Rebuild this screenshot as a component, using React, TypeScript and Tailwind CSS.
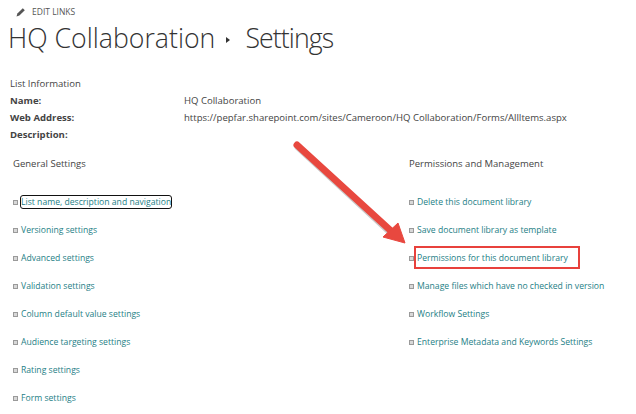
const generalLinks = [
  'List name, description and navigation',
  'Versioning settings',
  'Advanced settings',
  'Validation settings',
  'Column default value settings',
  'Audience targeting settings',
  'Rating settings',
  'Form settings',
];

const permissionLinks = [
  'Delete this document library',
  'Save document library as template',
  'Permissions for this document library',
  'Manage files which have no checked in version',
  'Workflow Settings',
  'Enterprise Metadata and Keywords Settings',
];

function Bullet() {
  return <span className="h-[5px] w-[5px] shrink-0 border border-[#9a9a9a] bg-[#d8d8d8]" />;
}

function SettingsLink({ label }: { label: string }) {
  const focused = label.startsWith('List name');
  const boxed = label.startsWith('Permissions');
  return (
    <li className="flex h-7 items-center gap-[3px]">
      <Bullet />
      <span
        className={`relative whitespace-nowrap text-[8.65px] leading-none text-[#1e8086] ${focused ? 'rounded-[2px] py-[2px] outline-[1.5px] outline-[#111]' : ''}`}
      >
        {label}
        {boxed && <span className="absolute -left-[3px] -top-[8px] h-[23px] w-[166px] border-2 border-[#e8413c]" />}
      </span>
    </li>
  );
}

export default function App() {
  return (
    <div className="relative h-[414px] w-[636px] overflow-hidden bg-white font-['Open_Sans',sans-serif] text-[#444]">
      <header className="pl-2 pt-[7px]">
        <div className="flex items-center gap-[6px] pl-2 text-[8.5px] leading-[10px] text-[#555]">
          <svg width="10" height="10" viewBox="0 0 10 10" fill="#555">
            <path d="M0.5 9.5 L1.4 6.6 L6.8 1.2 L8.8 3.2 L3.4 8.6 Z" />
          </svg>
          EDIT LINKS
        </div>
        <h1 className="mt-[3px] flex h-[36px] items-center whitespace-nowrap text-[26.7px] font-light leading-none text-[#333]">
          HQ Collaboration
          <span className="ml-[11px] mr-[15px] mt-[3px] h-0 w-0 border-y-[3px] border-l-[4px] border-y-transparent border-l-[#333]" />
          <span className="tracking-[-0.9px]">Settings</span>
        </h1>
      </header>

      <section className="mt-[19px] pl-[10px] text-[9.55px] leading-[17px]">
        <div>List Information</div>
        <div className="grid grid-cols-[174px_1fr]">
          <b className="font-bold">Name:</b>
          <span>HQ Collaboration</span>
          <b className="font-bold">Web Address:</b>
          <span>https://pepfar.sharepoint.com/sites/Cameroon/HQ Collaboration/Forms/AllItems.aspx</span>
          <b className="font-bold">Description:</b>
        </div>
      </section>

      <div className="mt-[14px] grid grid-cols-[396px_1fr] pl-[13px]">
        <div>
          <h2 className="text-[9.5px] leading-[14px]">General Settings</h2>
          <ul className="mt-[17px]">
            {generalLinks.map((l) => (
              <SettingsLink key={l} label={l} />
            ))}
          </ul>
        </div>
        <div>
          <h2 className="text-[9.5px] leading-[14px]">Permissions and Management</h2>
          <ul className="mt-[17px]">
            {permissionLinks.map((l) => (
              <SettingsLink key={l} label={l} />
            ))}
          </ul>
        </div>
      </div>

      <svg className="absolute left-[285px] top-[135px]" width="125" height="115" viewBox="0 0 125 115">
        <path d="M13 12 L104 96" stroke="#888" strokeWidth="7" strokeLinecap="round" opacity="0.45" />
        <path d="M12 10 L105 95" stroke="#e8483f" strokeWidth="7" strokeLinecap="round" />
        <path d="M120 108 L98 102 L113 88 Z" fill="#e8483f" stroke="#e8483f" strokeWidth="1" />
      </svg>
    </div>
  );
}
